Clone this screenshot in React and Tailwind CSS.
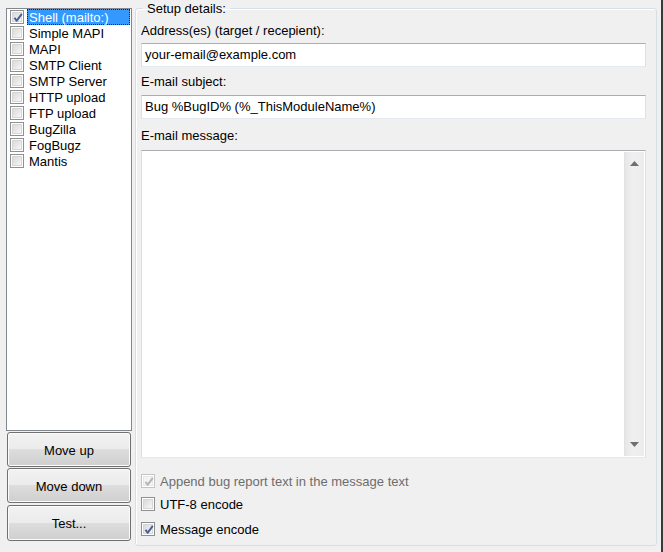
import React from "react";

const items = [
  "Shell (mailto:)",
  "Simple MAPI",
  "MAPI",
  "SMTP Client",
  "SMTP Server",
  "HTTP upload",
  "FTP upload",
  "BugZilla",
  "FogBugz",
  "Mantis",
];

function Check({ checked, disabled }) {
  return (
    <span
      className={
        "relative flex w-[14px] h-[14px] shrink-0 border p-[1px] bg-white " +
        (disabled ? "border-[#c4c4c4]" : "border-[#8e8f8f]")
      }
    >
      <span
        className={
          "flex-1 border " +
          (disabled
            ? "border-[#e6e6e6] bg-[#f4f4f4]"
            : "border-[#d6d6d6] bg-[linear-gradient(135deg,#d9d9d9,#f7f7f7)]")
        }
      />
      {checked && (
        <svg
          className="absolute left-0 top-0"
          width="14"
          height="14"
          viewBox="0 0 14 14"
        >
          <path
            d="M3.5 6.8 L5.6 9.8 L10.8 2.8"
            fill="none"
            stroke={disabled ? "#b5b5b5" : "#4a5f97"}
            strokeWidth="2"
            strokeLinejoin="round"
          />
        </svg>
      )}
    </span>
  );
}

function Btn({ children, className = "" }) {
  return (
    <button
      className={
        "w-[124px] ml-[1px] pt-[2px] rounded-[3px] border border-[#707070] bg-[linear-gradient(#f2f2f2_0%,#ebebeb_50%,#dddddd_50%,#cfcfcf_100%)] shadow-[inset_0_0_0_1px_#fbfbfb] text-[13px] leading-[16px] text-black " +
        className
      }
    >
      {children}
    </button>
  );
}

function TextBox({ value }) {
  return (
    <div className="w-[505px] h-[24px] border border-t-[#abadb3] border-x-[#dbdfe6] border-b-[#e3e9ef] bg-white flex items-center pl-[3px] text-[13px] leading-[16px] text-black">
      {value}
    </div>
  );
}

export default function App() {
  return (
    <div className="w-[663px] h-[552px] bg-[#f0f0f0] flex font-['Liberation_Sans',Arial,sans-serif] text-[13px] leading-[16px] text-black overflow-hidden">
      {/* Left column */}
      <div className="ml-[6px] pt-[8px] w-[126px] flex flex-col">
        <div className="h-[423px] border border-[#828790] bg-white flex flex-col">
          {items.map((it, i) => (
            <div key={it} className="h-[16px] flex items-start pl-[3px]">
              <span className="mt-[1px]">
                <Check checked={i === 0} />
              </span>
              <span
                className={
                  "ml-[3px] h-[16px] pl-[1px] block leading-[16px] whitespace-nowrap border " +
                  (i === 0
                    ? "bg-[#3399ff] text-white w-[103px] border-dotted border-[#222]"
                    : "border-transparent")
                }
              >
                {it}
              </span>
            </div>
          ))}
        </div>
        <Btn className="mt-[1px] h-[35px]">Move up</Btn>
        <Btn className="mt-[1px] h-[35px]">Move down</Btn>
        <Btn className="mt-[2px] h-[36px]">Test...</Btn>
      </div>

      {/* Right group box */}
      <fieldset className="ml-[3px] w-[522px] h-[546px] border border-[#d5dfe5] rounded-[3px] pl-[5px] pr-[10px] pt-[6px] shadow-[inset_1px_1px_0_#fff]">
        <legend className="ml-[2px] px-[4px] leading-[16px] text-black">
          <span className="inline-block translate-y-[1px]">Setup details:</span>
        </legend>
        <div className="flex flex-col">
          <div className="h-[16px] pt-[1px]">Address(es) (target / recepient):</div>
          <div className="mt-[5px]">
            <TextBox value="your-email@example.com" />
          </div>
          <div className="mt-[6px] h-[16px] pt-[1px]">E-mail subject:</div>
          <div className="mt-[6px]">
            <TextBox value="Bug %BugID% (%_ThisModuleName%)" />
          </div>
          <div className="mt-[8px] h-[16px] pt-[1px]">E-mail message:</div>
          <div className="mt-[7px] w-[505px] h-[308px] border border-t-[#abadb3] border-x-[#dbdfe6] border-b-[#e3e9ef] bg-white flex">
            <div className="flex-1" />
            <div className="w-[20px] my-[1px] mr-[1px] bg-[linear-gradient(90deg,#e6e6e6,#f0f0f0_40%,#ececec)] border-l border-[#e2e2e2] flex flex-col items-center justify-between py-[9px]">
              <svg width="9" height="5" viewBox="0 0 9 5">
                <path d="M0 5 L4.5 0 L9 5 Z" fill="#6e6e6e" />
              </svg>
              <svg width="9" height="5" viewBox="0 0 9 5">
                <path d="M0 0 L9 0 L4.5 5 Z" fill="#6e6e6e" />
              </svg>
            </div>
          </div>
          <div className="mt-[15px] h-[16px] flex items-center">
            <Check checked disabled />
            <span className="ml-[5px] pt-[2px] text-[#6d6d6d]">
              Append bug report text in the message text
            </span>
          </div>
          <div className="mt-[7px] h-[16px] flex items-center">
            <Check />
            <span className="ml-[5px] pt-[2px]">UTF-8 encode</span>
          </div>
          <div className="mt-[9px] h-[16px] flex items-center">
            <Check checked />
            <span className="ml-[5px] pt-[2px]">Message encode</span>
          </div>
        </div>
      </fieldset>

      <div className="ml-[4px] w-[2px] h-full bg-[#3a3a3a]" />
    </div>
  );
}
